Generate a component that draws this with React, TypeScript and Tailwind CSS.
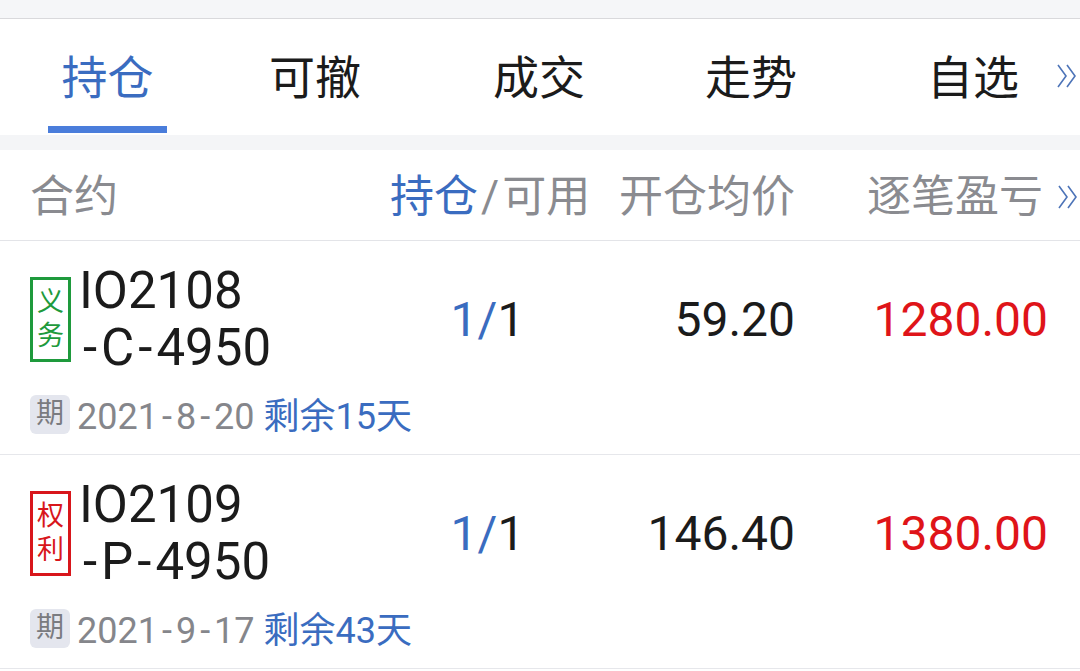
import React from "react";

const FONT = { fontFamily: "Roboto, 'Noto Sans CJK SC', sans-serif" };

function Chevrons({ className }: { className?: string }) {
  return (
    <svg width="22" height="26" viewBox="0 0 22 26" className={className} fill="none" stroke="#4d74b8" strokeWidth="1.6" strokeLinejoin="miter">
      <path d="M2 2 L10 13 L2 24" />
      <path d="M11 2 L19 13 L11 24" />
    </svg>
  );
}

function Dashed({ text, pad }: { text: string; pad: string }) {
  return (
    <>
      {text.split("").map((c, i) =>
        c === "-" ? (
          <span key={i} className={`inline-block ${pad}`}>
            -
          </span>
        ) : (
          <span key={i}>{c}</span>
        )
      )}
    </>
  );
}

type Row = {
  tag: string[];
  tagColor: "green" | "red";
  l1: string;
  l2: string;
  avg: string;
  pnl: string;
  date: string;
  left: string;
};

const rows: Row[] = [
  { tag: ["义", "务"], tagColor: "green", l1: "IO2108", l2: "-C-4950", avg: "59.20", pnl: "1280.00", date: "2021-8-20", left: "剩余15天" },
  { tag: ["权", "利"], tagColor: "red", l1: "IO2109", l2: "-P-4950", avg: "146.40", pnl: "1380.00", date: "2021-9-17", left: "剩余43天" },
];

function PositionRow({ r }: { r: Row }) {
  const green = r.tagColor === "green";
  return (
    <div className="h-[214px] border-b border-[#e6e7eb] flex flex-col">
      <div className="flex items-center pt-[21px]">
        <div className="w-[390px] pl-[30px] flex items-center shrink-0">
          <div
            className={
              green
                ? "w-[41px] h-[85px] border-[3px] border-[#1e9a3c] text-[#1e9a3c] flex flex-col items-center justify-center text-[27px] leading-[34px] shrink-0"
                : "w-[41px] h-[85px] border-[3px] border-[#d8161b] text-[#d8161b] flex flex-col items-center justify-center text-[27px] leading-[34px] shrink-0"
            }
          >
            <span>{r.tag[0]}</span>
            <span>{r.tag[1]}</span>
          </div>
          <div className="ml-[8px] text-[51px] leading-[57px] text-[#1b1b1b] whitespace-nowrap">
            <div>{r.l1}</div>
            <div>
              <Dashed text={r.l2} pad="px-[4px]" />
            </div>
          </div>
        </div>
        <div className="w-[195px] shrink-0 text-center text-[48px] leading-[57px] whitespace-nowrap">
          <span className="text-[#3a6cc0]">1/</span>
          <span className="text-[#1b1b1b]">1</span>
        </div>
        <div className="w-[210px] shrink-0 text-right text-[48px] leading-[57px] text-[#1b1b1b]">{r.avg}</div>
        <div className="w-[253px] shrink-0 text-right text-[48px] leading-[57px] text-[#df1419]">{r.pnl}</div>
      </div>
      <div className="flex items-center pl-[30px] mt-[18px] h-[40px] whitespace-nowrap">
        <div className="w-[40px] h-[39px] shrink-0 rounded-[6px] bg-[#e4e6ee] text-[#7a7b80] text-[28px] flex items-center justify-center">期</div>
        <span className="ml-[7px] pt-[6px] text-[36px] text-[#85868b]">
          <Dashed text={r.date} pad="px-[4px]" />
        </span>
        <span className="ml-[9px] pt-[6px] text-[36px] text-[#3a6cc0]">{r.left}</span>
      </div>
    </div>
  );
}

export default function App() {
  const tabs = [
    { t: "持仓", ml: "ml-[48px]" },
    { t: "可撤", ml: "ml-[102px]" },
    { t: "成交", ml: "ml-[132px]" },
    { t: "走势", ml: "ml-[120px]" },
    { t: "自选", ml: "ml-[130px]" },
  ];
  return (
    <div className="w-[1080px] h-[671px] bg-white overflow-hidden" style={FONT}>
      <div className="h-[19px] bg-[#f5f6f8] border-b border-[#d9d9dc]" />
      <div className="h-[116px] flex items-start">
        {tabs.map((tab, i) => (
          <div key={tab.t} className={`${tab.ml} shrink-0 flex flex-col items-center`}>
            <div
              className={
                i === 0
                  ? "mt-[36px] text-[46px] leading-[46px] text-[#3a6cc0] whitespace-nowrap"
                  : "mt-[36px] text-[46px] leading-[46px] text-[#1b1b1b] whitespace-nowrap"
              }
            >
              {tab.t}
            </div>
            {i === 0 ? <div className="mt-[25px] w-[119px] h-[7px] bg-[#4a7ddb]" /> : null}
          </div>
        ))}
        <Chevrons className="ml-[37px] mt-[44px] shrink-0" />
      </div>
      <div className="h-[15px] bg-[#f4f5f7]" />
      <div className="h-[91px] flex items-center border-b border-[#e3e4e8] text-[44px] text-[#8a8b90] whitespace-nowrap">
        <div className="w-[390px] shrink-0 pl-[30px] pt-[3px]">合约</div>
        <div className="w-[195px] shrink-0 text-center pt-[3px]">
          <span className="text-[#3a6cc0]">持仓</span>
          <span className="inline-block px-[3px]">/</span>可用
        </div>
        <div className="w-[210px] shrink-0 text-right pt-[3px]">开仓均价</div>
        <div className="w-[248px] shrink-0 text-right pt-[3px]">逐笔盈亏</div>
        <Chevrons className="ml-[14px] mt-[3px] shrink-0" />
      </div>
      {rows.map((r) => (
        <PositionRow key={r.l1} r={r} />
      ))}
    </div>
  );
}
